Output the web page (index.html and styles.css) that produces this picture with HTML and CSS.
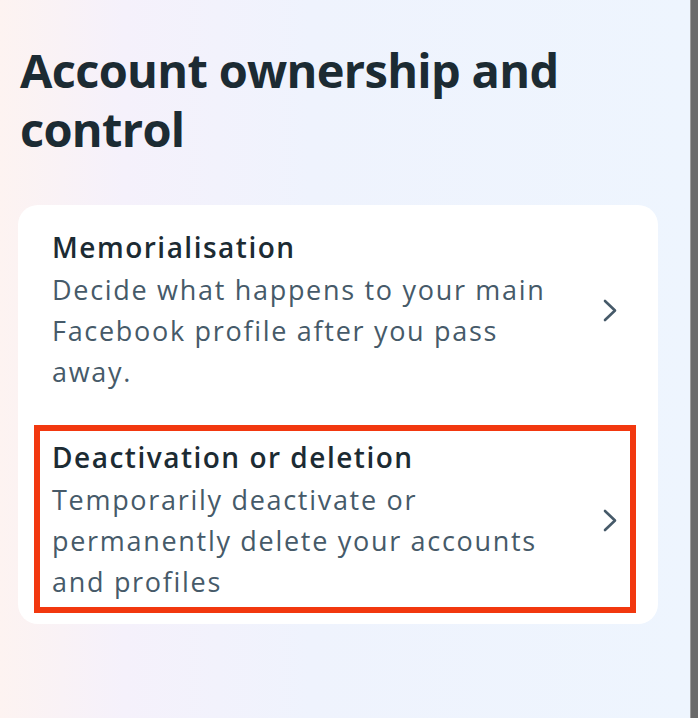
FILE: index.html
```html
<!DOCTYPE html>
<html lang="en">
<head>
<meta charset="utf-8">
<title>Account ownership and control</title>
<link rel="stylesheet" href="styles.css">
</head>
<body>
<div class="screen">
  <main class="content">
    <h1 class="page-title">Account ownership and control</h1>
    <section class="card">
      <a class="item">
        <div class="item-text">
          <div class="item-title">Memorialisation</div>
          <div class="item-desc">Decide what happens to your main Facebook profile after you pass away.</div>
        </div>
        <svg class="chevron" viewBox="0 0 14 23" width="14" height="23" aria-hidden="true"><path d="M2 2 L12 11.5 L2 21" fill="none" stroke="currentColor" stroke-width="2.6" stroke-linecap="round" stroke-linejoin="round"/></svg>
      </a>
      <a class="item item--highlight">
        <div class="item-text">
          <div class="item-title">Deactivation or deletion</div>
          <div class="item-desc">Temporarily deactivate or permanently delete your accounts and profiles</div>
        </div>
        <svg class="chevron" viewBox="0 0 14 23" width="14" height="23" aria-hidden="true"><path d="M2 2 L12 11.5 L2 21" fill="none" stroke="currentColor" stroke-width="2.6" stroke-linecap="round" stroke-linejoin="round"/></svg>
      </a>
    </section>
  </main>
  <div class="edge-bar"></div>
</div>
</body>
</html>
```
FILE: styles.css
```css
html, body {
  margin: 0;
  padding: 0;
  height: 100%;
}
body {
  font-family: "Open Sans", "Noto Sans", sans-serif;
  color: #1c2b33;
}
.screen {
  display: flex;
  height: 718px;
  overflow: hidden;
}
.content {
  flex: 1;
  padding: 0 32px 0 18px;
  background: linear-gradient(90deg, #fdf3f1 0%, #f5f1fb 18%, #eff3fd 45%, #eef5fe 100%);
}
.edge-bar {
  width: 7px;
  background: #6a6a6a;
  border-left: 1px solid #9a9a9a;
}
.page-title {
  margin: 41px 0 46px 2px;
  font-size: 47px;
  line-height: 59px;
  font-weight: 700;
  letter-spacing: -0.7px;
  color: #1c2b33;
}
.card {
  background: #fff;
  border-radius: 20px;
  padding: 0 0 22px;
}
.item {
  position: relative;
  display: flex;
  align-items: center;
  padding: 24px 41px 23px 34px;
  text-decoration: none;
  color: inherit;
}
.item + .item {
  padding-bottom: 0;
}
.item-text {
  flex: 1;
}
.item-title {
  font-size: 28px;
  line-height: 36px;
  font-weight: 600;
  letter-spacing: 1.5px;
  color: #1c2b33;
}
.item-desc {
  margin-top: 4px;
  font-size: 27px;
  line-height: 41px;
  letter-spacing: 1.7px;
  color: #465a69;
  max-width: 515px;
}
.chevron {
  flex: none;
  color: #465a69;
  margin-left: 20px;
}
.item--highlight::after {
  content: "";
  position: absolute;
  top: 10px;
  left: 16px;
  right: 22px;
  bottom: -11px;
  border: 6px solid #f2380f;
  pointer-events: none;
}
```
